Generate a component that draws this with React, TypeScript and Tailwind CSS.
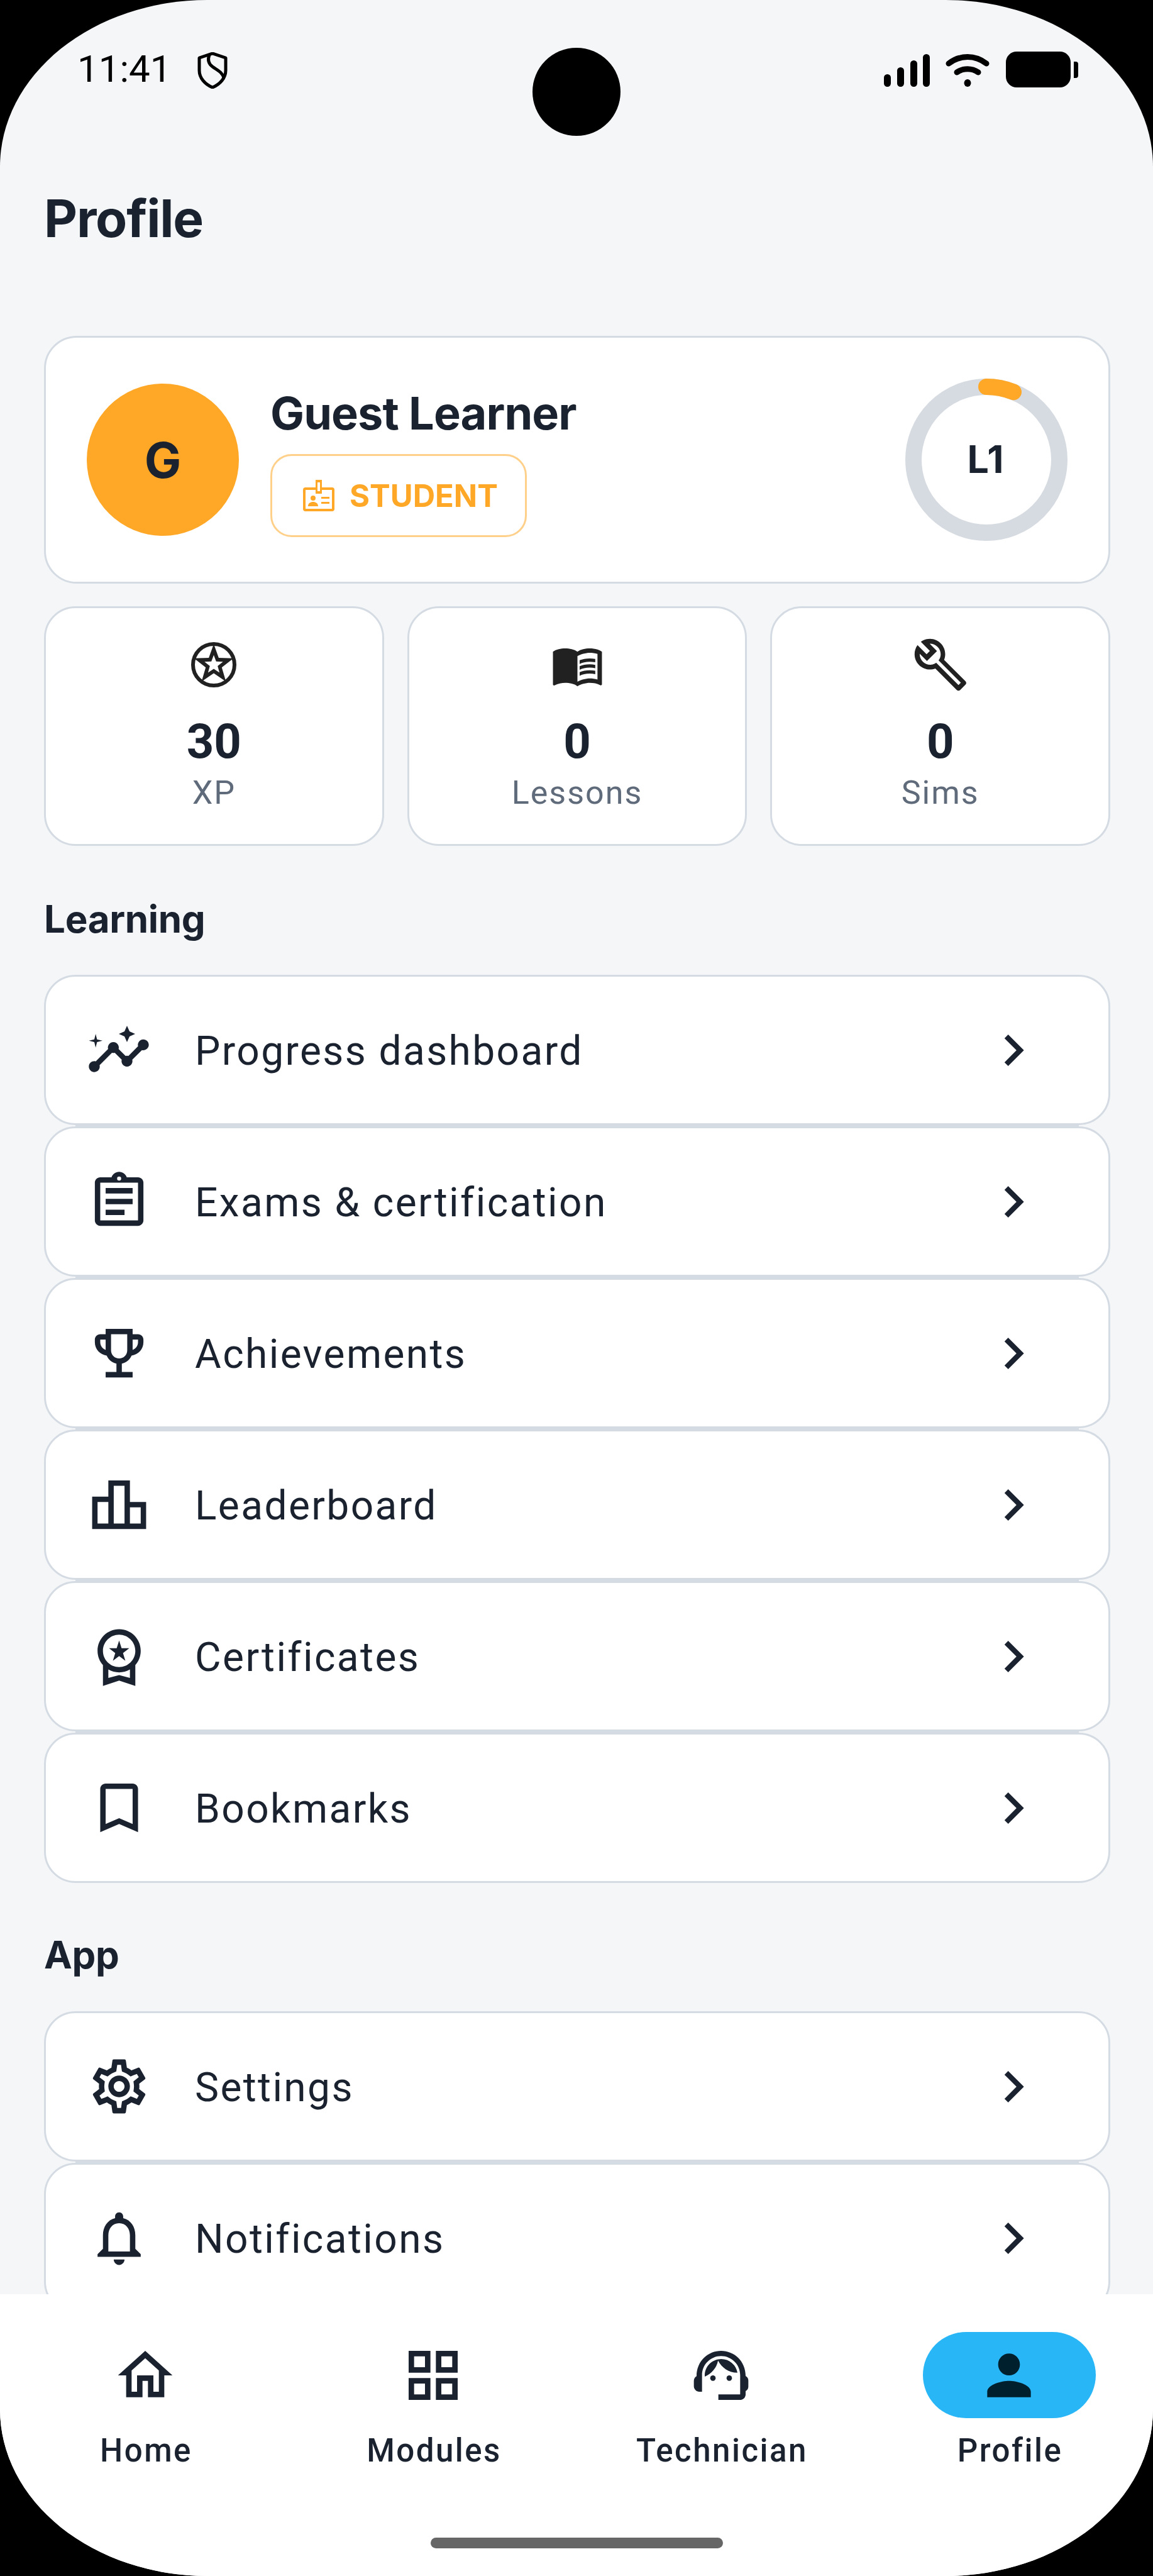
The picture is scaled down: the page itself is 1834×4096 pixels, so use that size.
import type { ReactNode } from "react";

const INK = "#1a2230";

// material-style glyphs, 24 unit grid
function Mi({ d, className }: { d: string; className?: string }) {
  return (
    <svg viewBox="0 0 24 24" fill="currentColor" className={className}>
      <path d={d} fillRule="evenodd" />
    </svg>
  );
}

const ICONS: Record<string, ReactNode> = {
  progress: (
    <svg viewBox="0 0 24 24" fill="currentColor" className="w-[104px] h-[104px]">
      <path d="M21 8c-1.45 0-2.26 1.44-1.93 2.51l-3.55 3.56c-.3-.09-.74-.09-1.04 0l-2.55-2.55C12.27 10.45 11.46 9 10 9c-1.45 0-2.27 1.44-1.93 2.52l-4.56 4.55C2.44 15.74 1 16.55 1 18c0 1.1.9 2 2 2 1.45 0 2.26-1.44 1.93-2.51l4.55-4.56c.3.09.74.09 1.04 0l2.55 2.55C12.73 16.55 13.54 18 15 18c1.45 0 2.27-1.44 1.93-2.52l3.56-3.55c1.07.33 2.51-.48 2.51-1.93 0-1.1-.9-2-2-2z" />
      <path d="M15 9l.94-2.07L18 6l-2.06-.93L15 3l-.92 2.07L12 6l2.08.93zM3.5 11L4 9l2-.5L4 8l-.5-2L3 8l-2 .5L3 9z" />
    </svg>
  ),
  exams: <Mi className="w-[103px] h-[103px]" d="M19 3h-4.18C14.4 1.84 13.3 1 12 1s-2.4.84-2.82 2H5c-1.1 0-2 .9-2 2v14c0 1.1.9 2 2 2h14c1.1 0 2-.9 2-2V5c0-1.1-.9-2-2-2zm-7-.25a.75.75 0 1 1 0 1.5.75.75 0 0 1 0-1.5zM19 19H5V5h14v14zM7 7h10v2H7zm0 4h10v2H7zm0 4h7v2H7z" />,
  trophy: <Mi className="w-[103px] h-[103px]" d="M19 5h-2V3H7v2H5c-1.1 0-2 .9-2 2v1c0 2.55 1.92 4.63 4.39 4.94.63 1.5 1.98 2.63 3.61 2.96V19H7v2h10v-2h-4v-3.1c1.63-.33 2.98-1.46 3.61-2.96C19.08 12.63 21 10.55 21 8V7c0-1.1-.9-2-2-2zM5 8V7h2v3.82C5.84 10.4 5 9.3 5 8zm7 6c-1.65 0-3-1.35-3-3V5h6v6c0 1.65-1.35 3-3 3zm7-6c0 1.3-.84 2.4-2 2.82V7h2v1z" />,
  board: <Mi className="w-[103px] h-[103px]" d="M16 11V3H8v6H2v12h20V11h-6zM10 5h4v14h-4V5zm-6 6h4v8H4v-8zm16 8h-4v-6h4v6z" />,
  cert: <Mi className="w-[103px] h-[103px]" d="M9.68 13.69 12 11.93l2.31 1.76-.88-2.85L15.75 9h-2.84L12 6.19 11.09 9H8.25l2.31 1.84-.88 2.85zM20 10c0-4.42-3.58-8-8-8s-8 3.58-8 8c0 2.03.76 3.87 2 5.28V23l6-2 6 2v-7.72c1.24-1.41 2-3.25 2-5.28zm-8-6c3.31 0 6 2.69 6 6s-2.69 6-6 6-6-2.69-6-6 2.69-6 6-6zm0 15-4 1.02v-3.1c1.18.68 2.54 1.08 4 1.08s2.82-.4 4-1.08v3.1L12 19z" />,
  bookmark: <Mi className="w-[103px] h-[103px]" d="M17 3H7c-1.1 0-2 .9-2 2v16l7-3 7 3V5c0-1.1-.9-2-2-2zm0 15-5-2.18L7 18V5h10v13z" />,
  settings: <Mi className="w-[103px] h-[103px]" d="M19.43 12.98c.04-.32.07-.64.07-.98s-.03-.66-.07-.98l2.11-1.65c.19-.15.24-.42.12-.64l-2-3.46c-.12-.22-.39-.3-.61-.22l-2.49 1c-.52-.4-1.08-.73-1.69-.98l-.38-2.65A.488.488 0 0 0 14 2h-4c-.25 0-.46.18-.49.42l-.38 2.65c-.61.25-1.17.59-1.69.98l-2.49-1c-.23-.09-.49 0-.61.22l-2 3.46c-.13.22-.07.49.12.64l2.11 1.65c-.04.32-.07.65-.07.98s.03.66.07.98l-2.11 1.65c-.19.15-.24.42-.12.64l2 3.46c.12.22.39.3.61.22l2.49-1c.52.4 1.08.73 1.69.98l.38 2.65c.03.24.24.42.49.42h4c.25 0 .46-.18.49-.42l.38-2.65c.61-.25 1.17-.59 1.69-.98l2.49 1c.23.09.49 0 .61-.22l2-3.46c.12-.22.07-.49-.12-.64l-2.11-1.65zm-1.98-1.71c.04.31.05.52.05.73s-.02.43-.05.73l-.14 1.13.89.7 1.08.84-.7 1.21-1.27-.51-1.04-.42-.9.68c-.43.32-.84.56-1.25.73l-1.06.43-.16 1.13-.2 1.35h-1.4l-.19-1.35-.16-1.13-1.06-.43c-.43-.18-.83-.41-1.23-.71l-.91-.7-1.06.43-1.27.51-.7-1.21 1.08-.84.89-.7-.14-1.13c-.03-.31-.05-.54-.05-.74s.02-.43.05-.73l.14-1.13-.89-.7-1.08-.84.7-1.21 1.27.51 1.04.42.9-.68c.43-.32.84-.56 1.25-.73l1.06-.43.16-1.13.2-1.35h1.39l.19 1.35.16 1.13 1.06.43c.43.18.83.41 1.23.71l.91.7 1.06-.43 1.27-.51.7 1.21-1.07.85-.89.7.14 1.13zM12 8c-2.21 0-4 1.79-4 4s1.79 4 4 4 4-1.79 4-4-1.79-4-4-4zm0 6c-1.1 0-2-.9-2-2s.9-2 2-2 2 .9 2 2-.9 2-2 2z" />,
  bell: <Mi className="w-[103px] h-[103px]" d="M12 22c1.1 0 2-.9 2-2h-4c0 1.1.9 2 2 2zm6-6v-5c0-3.07-1.63-5.64-4.5-6.32V4c0-.83-.67-1.5-1.5-1.5s-1.5.67-1.5 1.5v.68C7.64 5.36 6 7.92 6 11v5l-2 2v1h16v-1l-2-2zm-2 1H8v-6c0-2.48 1.51-4.5 4-4.5s4 2.02 4 4.5v6z" />,
};

function Row({ icon, label }: { icon: string; label: string }) {
  return (
    <div className="flex h-[239px] items-center rounded-[50px] border-[3px] border-[#d5dbe3] bg-white pl-[64px] pr-[101px]">
      <span className="flex w-[104px] justify-center">{ICONS[icon]}</span>
      <span className="ml-[69px] flex-1 pt-[5px] font-['Roboto',sans-serif] text-[64px] leading-none tracking-[2.4px]">{label}</span>
      <Mi className="h-[100px] w-[100px]" d="M10 6 8.59 7.41 13.17 12l-4.58 4.59L10 18l6-6z" />
    </div>
  );
}

function RowList({ items }: { items: [string, string][] }) {
  return (
    <div className="flex flex-col">
      {items.map(([icon, label], i) => (
        <div key={label} className="flex flex-col">
          {i > 0 && <div className="mx-[50px] h-[2px] bg-[#d5dbe3]" />}
          <Row icon={icon} label={label} />
        </div>
      ))}
    </div>
  );
}

function Stat({ icon, value, label }: { icon: ReactNode; value: string; label: string }) {
  return (
    <div className="flex h-[381px] flex-1 flex-col items-center rounded-[50px] border-[3px] border-[#d5dbe3] bg-white pt-[44px]">
      <div className="flex h-[92px] w-[92px] items-center justify-center text-[#212121]">{icon}</div>
      <div className="mt-[33px] font-['Roboto',sans-serif] text-[76px] font-bold leading-[86px]">{value}</div>
      <div className="mt-[4px] font-['Roboto',sans-serif] text-[52px] leading-[70px] tracking-[2px] text-[#5f6b7a]">{label}</div>
    </div>
  );
}

function NavItem({ label, active, children }: { label: string; active?: boolean; children: ReactNode }) {
  return (
    <div className="flex flex-1 flex-col items-center">
      <div className={`flex h-[137px] w-[275px] items-center justify-center rounded-full ${active ? "bg-[#29b6f6] text-[#00202e]" : ""}`}>
        {children}
      </div>
      <div className="mt-[22px] pl-[3px] font-['Roboto',sans-serif] text-[51px] font-medium leading-[60px] tracking-[2.5px]">{label}</div>
    </div>
  );
}

export default function App() {
  return (
    <div className="h-[4096px] w-[1834px] bg-black">
      <div
        className="relative flex h-full flex-col overflow-hidden rounded-[330px/265px] bg-[#f4f6f8]"
        style={{ color: INK }}
      >
        {/* status bar */}
        <div className="flex h-[240px] shrink-0 items-start justify-between pl-[123px] pr-[119px] pt-[78px] text-black">
          <div className="flex items-center gap-[42px]">
            <span className="font-['Roboto',sans-serif] text-[60px] leading-[64px]">11:41</span>
            <svg viewBox="0 0 48 58" className="mt-[3px] h-[58px] w-[48px]" fill="none" stroke="currentColor" strokeWidth="5" strokeLinejoin="round">
              <path d="M24 2 45 9v20c0 12-9 22-21 27C12 51 3 41 3 29V9z" />
              <path d="M19 4c-3 8-2 14 5 19 8 6 16 9 18 18" />
            </svg>
          </div>
          <div className="flex items-end gap-[24px] pt-[4px]">
            <svg viewBox="0 0 74 52" className="mb-[1px] h-[52px] w-[74px]" fill="currentColor">
              <rect x="0" y="32" width="11" height="20" rx="5.5" />
              <rect x="21" y="21" width="11" height="31" rx="5.5" />
              <rect x="42" y="10" width="11" height="42" rx="5.5" />
              <rect x="62" y="0" width="11" height="52" rx="5.5" />
            </svg>
            <svg viewBox="0 0 70 52" className="mb-[1px] mr-[2px] h-[52px] w-[70px]" fill="none" stroke="currentColor" strokeLinecap="round" strokeWidth="9">
              <path d="M5 15c18-14 42-14 60 0" />
              <path d="M18 29c10-7 24-7 34 0" />
              <ellipse cx="35" cy="46" rx="5.5" ry="6" fill="currentColor" stroke="none" />
            </svg>
            <div className="flex items-center gap-[5px]">
              <div className="h-[57px] w-[103px] rounded-[17px] bg-black" />
              <div className="h-[26px] w-[7px] rounded-r-[4px] bg-black" />
            </div>
          </div>
        </div>
        <div className="absolute left-[847px] top-[76px] h-[140px] w-[140px] rounded-full bg-black" />

        <main className="flex min-h-0 flex-1 flex-col overflow-hidden pl-[70px] pr-[68px]">
          <h1 className="mt-[58px] font-['Inter',sans-serif] text-[82px] font-bold leading-[100px] tracking-[-1.2px]">Profile</h1>

          {/* profile card */}
          <div className="mt-[136px] flex h-[394px] shrink-0 items-center rounded-[52px] border-[3px] border-[#d5dbe3] bg-white pl-[65px] pr-[65px]">
            <div className="flex h-[242px] w-[242px] items-center justify-center rounded-full bg-[#ffa726] font-['Inter',sans-serif] text-[78px] font-bold">G</div>
            <div className="ml-[50px] flex flex-1 flex-col items-start pt-[5px]">
              <div className="font-['Inter',sans-serif] text-[72px] font-bold leading-[88px] tracking-[-0.9px]">Guest Learner</div>
              <div className="mt-[21px] flex h-[132px] w-[408px] items-center gap-[24px] rounded-[34px] border-[3px] border-[#ffd08a] pl-[49px] text-[#ffa726]">
                <svg viewBox="0 0 50 50" className="h-[50px] w-[50px]" fill="currentColor" fillRule="evenodd">
                  <path d="M20 0h10v12h16a4 4 0 0 1 4 4v30a4 4 0 0 1-4 4H4a4 4 0 0 1-4-4V16a4 4 0 0 1 4-4h16zm3 4v14h4V4zM4 16v30h42V16H30v6H20v-6z" />
                  <circle cx="16" cy="29" r="4" />
                  <path d="M8 42c0-5 4-7 8-7s8 2 8 7zM29 27h13v3H29zM29 35h13v3H29z" />
                </svg>
                <span className="font-['Inter',sans-serif] text-[49px] font-bold leading-none">STUDENT</span>
              </div>
            </div>
            <div className="relative flex h-[258px] w-[258px] items-center justify-center">
              <svg viewBox="0 0 258 258" className="absolute inset-0" fill="none" strokeWidth="26">
                <circle cx="129" cy="129" r="116" stroke="#d6dbe1" />
                <circle cx="129" cy="129" r="116" stroke="#ffa726" strokeLinecap="round" strokeDasharray="44 729" transform="rotate(-90 129 129)" />
              </svg>
              <span className="pr-[3px] font-['Inter',sans-serif] text-[61px] font-bold">L1</span>
            </div>
          </div>

          {/* stats */}
          <div className="mt-[36px] flex shrink-0 gap-[37px]">
            <Stat
              value="30"
              label="XP"
              icon={
                <svg viewBox="0 0 72 72" className="h-[72px] w-[72px]" fill="currentColor">
                  <circle cx="36" cy="36" r="33" fill="none" stroke="currentColor" strokeWidth="6" />
                  <path
                    fillRule="evenodd"
                    d="M36 3 43.9 25.1 67.4 25.8 48.8 40.2 55.4 62.7 36 49.5 16.6 62.7 23.2 40.2 4.6 25.8 28.1 25.1zM36 20.5 32.2 30.7 21.3 31.2 29.8 38 26.9 48.5 36 42.5 45.1 48.5 42.2 38 50.7 31.2 39.8 30.7z"
                  />
                </svg>
              }
            />
            <Stat
              value="0"
              label="Lessons"
              icon={<Mi className="h-[85px] w-[85px]" d="M21 5c-1.11-.35-2.33-.5-3.5-.5-1.95 0-4.05.4-5.5 1.5-1.45-1.1-3.55-1.5-5.5-1.5S2.45 4.9 1 6v14.65c0 .25.25.5.5.5.1 0 .15-.05.25-.05C3.1 20.45 5.05 20 6.5 20c1.95 0 4.05.4 5.5 1.5 1.35-.85 3.8-1.5 5.5-1.5 1.65 0 3.35.3 4.75 1.05.1.05.15.05.25.05.25 0 .5-.25.5-.5V6c-.6-.45-1.25-.75-2-1zm0 13.5c-1.1-.35-2.3-.5-3.5-.5-1.7 0-4.15.65-5.5 1.5V8c1.35-.85 3.8-1.5 5.5-1.5 1.2 0 2.4.15 3.5.5v11.5zM17.5 10.5c.88 0 1.73.09 2.5.26V9.24c-.79-.15-1.64-.24-2.5-.24-1.7 0-3.24.29-4.5.83v1.66c1.13-.64 2.7-.99 4.5-.99zM13 12.49v1.66c1.13-.64 2.7-.99 4.5-.99.88 0 1.73.09 2.5.26V11.9c-.79-.15-1.64-.24-2.5-.24-1.7 0-3.24.3-4.5.83zM17.5 14.33c-1.7 0-3.24.29-4.5.83v1.66c1.13-.64 2.7-.99 4.5-.99.88 0 1.73.09 2.5.26v-1.52c-.79-.16-1.64-.24-2.5-.24z" />}
            />
            <Stat
              value="0"
              label="Sims"
              icon={<Mi className="h-[90px] w-[90px]" d="M22.61 18.99l-9.08-9.08c.93-2.34.45-5.1-1.44-7C9.79.61 6.21.4 3.66 2.25L7.5 6.1 6.08 7.51 2.25 3.69C.4 6.23.61 9.82 2.91 12.11c1.86 1.86 4.57 2.35 6.89 1.48l9.11 9.11c.39.39 1.02.39 1.41 0l2.3-2.3c.39-.38.39-1.01-.01-1.41zm-3 1.6-9.46-9.46c-.61.45-1.26.72-1.94.82-1.3.19-2.67-.2-3.67-1.2C3.62 9.8 3.15 8.55 3.17 7.32l3.09 3.09 4.24-4.24-3.09-3.09c1.23-.02 2.48.45 3.4 1.37 1.05 1.05 1.44 2.5 1.2 3.82-.12.68-.4 1.32-.84 1.89l9.45 9.45-.92.92z" />}
            />
          </div>

          <h2 className="mt-[78px] font-['Inter',sans-serif] text-[60px] font-bold leading-[76px] tracking-[-0.3px]">Learning</h2>
          <div className="mt-[51px] shrink-0">
            <RowList
              items={[
                ["progress", "Progress dashboard"],
                ["exams", "Exams & certification"],
                ["trophy", "Achievements"],
                ["board", "Leaderboard"],
                ["cert", "Certificates"],
                ["bookmark", "Bookmarks"],
              ]}
            />
          </div>

          <h2 className="mt-[76px] font-['Inter',sans-serif] text-[60px] font-bold leading-[76px] tracking-[-0.3px]">App</h2>
          <div className="mt-[52px] shrink-0">
            <RowList
              items={[
                ["settings", "Settings"],
                ["bell", "Notifications"],
              ]}
            />
          </div>
        </main>

        {/* bottom nav */}
        <nav className="relative flex h-[448px] shrink-0 items-start bg-white pl-[2px] pt-[60px]">
          <NavItem label="Home">
            <Mi className="h-[104px] w-[104px]" d="M12 3 2 12h3v8h6v-6h2v6h6v-8h3L12 3zm5 15h-2v-6H9v6H7v-7.81l5-4.5 5 4.5V18z" />
          </NavItem>
          <NavItem label="Modules">
            <Mi className="h-[104px] w-[104px]" d="M3 3v8h8V3H3zm6 6H5V5h4v4zm-6 4v8h8v-8H3zm6 6H5v-4h4v4zm4-16v8h8V3h-8zm6 6h-4V5h4v4zm-6 4v8h8v-8h-8zm6 6h-4v-4h4v4z" />
          </NavItem>
          <NavItem label="Technician">
            <svg viewBox="0 0 24 24" fill="currentColor" className="h-[104px] w-[104px]">
              <path d="M21 12.22C21 6.73 16.74 3 12 3c-4.69 0-9 3.65-9 9.28-.6.34-1 .98-1 1.72v2c0 1.1.9 2 2 2h1v-6.1c0-3.87 3.13-7 7-7s7 3.13 7 7V19h-8v2h8c1.1 0 2-.9 2-2v-1.22c.59-.31 1-.92 1-1.64v-2.3c0-.7-.41-1.31-1-1.62z" />
              <circle cx="9" cy="13" r="1" />
              <circle cx="15" cy="13" r="1" />
              <path d="M18 11.03A6.04 6.04 0 0 0 12.05 6c-3.03 0-6.29 2.51-6.03 6.45a8.07 8.07 0 0 0 4.86-5.89c1.31 2.63 4 4.44 7.12 4.47z" />
            </svg>
          </NavItem>
          <NavItem label="Profile" active>
            <Mi className="h-[104px] w-[104px]" d="M12 12c2.21 0 4-1.79 4-4s-1.79-4-4-4-4 1.79-4 4 1.79 4 4 4zm0 2c-2.67 0-8 1.34-8 4v2h16v-2c0-2.66-5.33-4-8-4z" />
          </NavItem>
          <div className="absolute bottom-[44px] left-[685px] h-[17px] w-[465px] rounded-full bg-[#666666]" />
        </nav>
      </div>
    </div>
  );
}
